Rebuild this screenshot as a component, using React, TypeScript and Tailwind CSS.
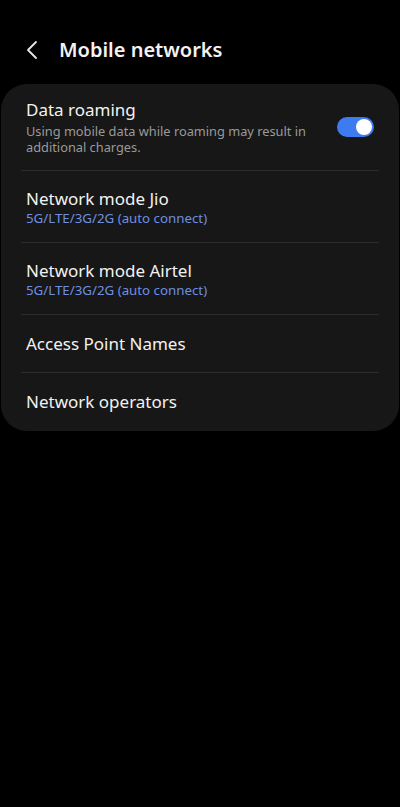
import React from "react";

const Divider = () => <div className="mx-[20px] h-px bg-[#2c2c2c]" />;

export default function App() {
  return (
    <div className="min-h-[807px] w-[400px] bg-black text-white" style={{ fontFamily: "'Noto Sans', Roboto, sans-serif" }}>
      <div className="flex h-[84px] items-center pl-[25px] pt-[16px]">
        <svg width="14" height="20" viewBox="0 0 14 20" fill="none">
          <path d="M11 2 L3 10 L11 18" stroke="#e8e8e8" strokeWidth="1.8" strokeLinecap="round" strokeLinejoin="round" />
        </svg>
        <div className="ml-[20px] text-[20px] font-semibold leading-[28px] text-[#f2f2f2]">Mobile networks</div>
      </div>
      <div className="mx-[1px] rounded-[26px] bg-[#171717]">
        <div className="flex h-[86px] items-center pl-[25px] pr-[25px]">
          <div className="flex flex-1 flex-col">
            <div className="text-[17px] leading-[22px] text-[#f2f2f2]">Data roaming</div>
            <div className="mt-[2px] text-[12.8px] leading-[16px] text-[#9a9a9a]">
              Using mobile data while roaming may result in additional charges.
            </div>
          </div>
          <div className="ml-[20px] flex h-[20px] w-[37px] shrink-0 items-center justify-end rounded-full bg-[#3e7bf0] pr-[2px]">
            <div className="h-[16px] w-[16px] rounded-full bg-white" />
          </div>
        </div>
        <Divider />
        <div className="flex h-[71px] flex-col justify-center pl-[25px]">
          <div className="text-[17px] leading-[22px] text-[#f2f2f2]">Network mode Jio</div>
          <div className="text-[13.3px] leading-[16px] text-[#6f8fe0]">5G/LTE/3G/2G (auto connect)</div>
        </div>
        <Divider />
        <div className="flex h-[71px] flex-col justify-center pl-[25px]">
          <div className="text-[17px] leading-[22px] text-[#f2f2f2]">Network mode Airtel</div>
          <div className="text-[13.3px] leading-[16px] text-[#6f8fe0]">5G/LTE/3G/2G (auto connect)</div>
        </div>
        <Divider />
        <div className="flex h-[57px] items-center pl-[25px]">
          <div className="text-[17px] leading-[22px] text-[#f2f2f2]">Access Point Names</div>
        </div>
        <Divider />
        <div className="flex h-[58px] items-center pl-[25px]">
          <div className="text-[17px] leading-[22px] text-[#f2f2f2]">Network operators</div>
        </div>
      </div>
    </div>
  );
}
